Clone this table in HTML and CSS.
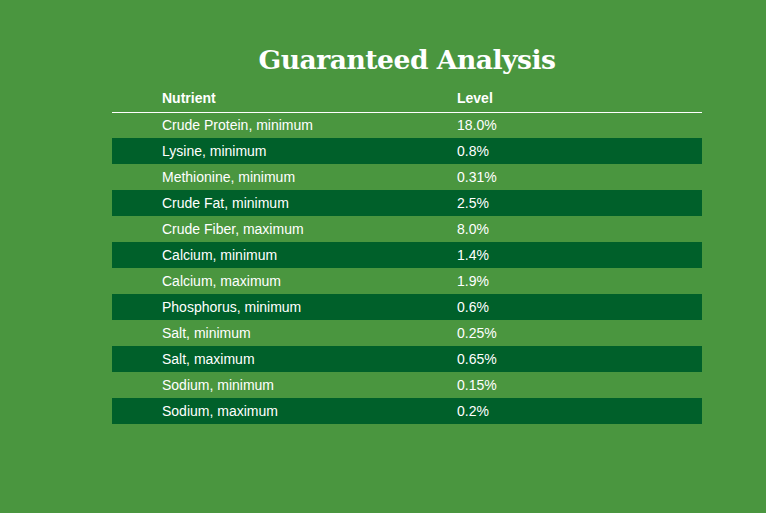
FILE: index.html
```html
<!DOCTYPE html>
<html>
<head>
<meta charset="utf-8">
<link rel="stylesheet" href="styles.css">
</head>
<body>
<div class="wrap">
  <h1 class="title">Guaranteed Analysis</h1>
  <table class="ga">
    <thead>
      <tr><th>Nutrient</th><th>Level</th></tr>
    </thead>
    <tbody>
      <tr><td>Crude Protein, minimum</td><td>18.0%</td></tr>
      <tr><td>Lysine, minimum</td><td>0.8%</td></tr>
      <tr><td>Methionine, minimum</td><td>0.31%</td></tr>
      <tr><td>Crude Fat, minimum</td><td>2.5%</td></tr>
      <tr><td>Crude Fiber, maximum</td><td>8.0%</td></tr>
      <tr><td>Calcium, minimum</td><td>1.4%</td></tr>
      <tr><td>Calcium, maximum</td><td>1.9%</td></tr>
      <tr><td>Phosphorus, minimum</td><td>0.6%</td></tr>
      <tr><td>Salt, minimum</td><td>0.25%</td></tr>
      <tr><td>Salt, maximum</td><td>0.65%</td></tr>
      <tr><td>Sodium, minimum</td><td>0.15%</td></tr>
      <tr><td>Sodium, maximum</td><td>0.2%</td></tr>
    </tbody>
  </table>
</div>
</body>
</html>
```
FILE: styles.css
```css
html, body {
  margin: 0;
  padding: 0;
  background: #4a963f;
  height: 100%;
}
body {
  font-family: "Liberation Sans", Arial, sans-serif;
  color: #ffffff;
}
.wrap {
  width: 590px;
  margin-left: 112px;
  padding-top: 40px;
}
.title {
  margin: 0;
  font-family: "DejaVu Serif", serif;
  font-weight: bold;
  font-size: 26.6px;
  line-height: 40px;
  text-align: center;
  letter-spacing: -0.5px;
}
.ga {
  width: 100%;
  border-collapse: collapse;
  margin-top: 6px;
  font-size: 14px;
}
.ga th, .ga td {
  width: 50%;
  text-align: left;
  padding: 0 0 1px 50px;
  height: 26px;
  line-height: 16px;
  box-sizing: border-box;
}
.ga th {
  font-weight: bold;
  font-size: 14px;
  border-bottom: 1px solid #ffffff;
}
.ga tbody tr:nth-child(even) {
  background: #00602a;
}
```
